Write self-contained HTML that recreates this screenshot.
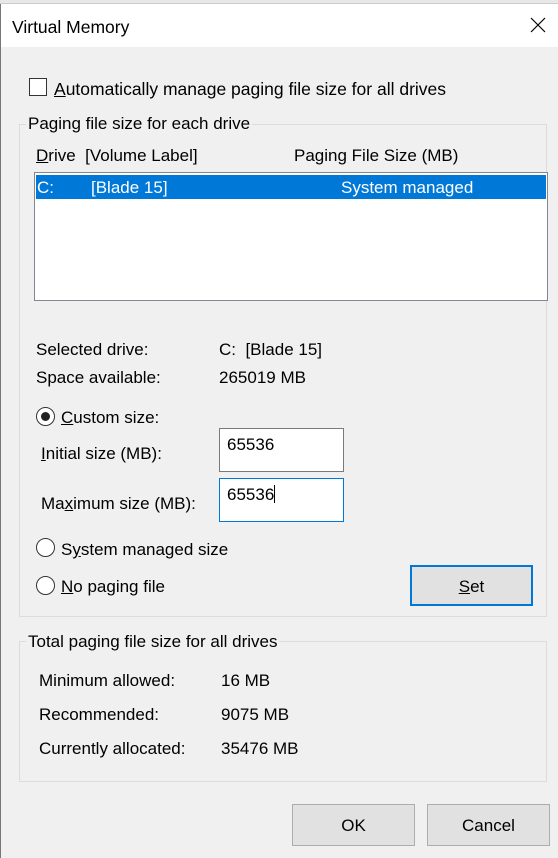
<!DOCTYPE html>
<html><head><style>
*{margin:0;padding:0;box-sizing:border-box}
body{width:558px;height:858px;background:#f0f0f0;font-family:"Liberation Sans",sans-serif;font-size:17px;color:#000;position:relative;overflow:hidden}
.a{position:absolute;white-space:nowrap;line-height:20px}
.u{text-decoration:underline}
.grp{position:absolute;border:1px solid #dcdcdc}
.lbl{position:absolute;background:#f0f0f0;padding:0 2px;line-height:20px}
.tb{position:absolute;background:#fff;border:1px solid #7a7a7a;padding:6px 0 0 7px;line-height:20px}
.btn{position:absolute;background:#e1e1e1;border:1px solid #adadad;text-align:center}
.rad{position:absolute;width:19px;height:19px;border:1px solid #333;border-radius:50%;background:#fff}
</style></head><body>
<div style="position:absolute;left:0;top:0;width:558px;height:4px;background:#e8e8e8;border-bottom:1px solid #ccc"></div>
<div style="position:absolute;left:0;top:4px;width:558px;height:854px;border-left:1px solid #777"></div>
<div style="position:absolute;left:1px;top:4px;width:557px;height:43px;background:#fff"></div>
<div class="a" style="left:12px;top:17px;font-size:17.5px">Virtual Memory</div>
<svg style="position:absolute;left:530px;top:17px" width="16" height="16"><path d="M1 1L15 15M15 1L1 15" stroke="#000" stroke-width="1.2"/></svg>

<div style="position:absolute;left:29px;top:78px;width:18px;height:18px;border:1px solid #333;background:#fff"></div>
<div class="a" style="left:54px;top:79px;font-size:17.5px"><span class="u">A</span>utomatically manage paging file size for all drives</div>

<div class="grp" style="left:19px;top:124px;width:528px;height:493px"></div>
<div class="lbl" style="left:26px;top:114px">Paging file size for each drive</div>
<div class="a" style="left:36px;top:146px"><span class="u">D</span>rive&nbsp; [Volume Label]</div>
<div class="a" style="left:294px;top:146px">Paging File Size (MB)</div>
<div style="position:absolute;left:34px;top:172px;width:514px;height:129px;background:#fff;border:1px solid #828790"></div>
<div style="position:absolute;left:36px;top:175px;width:510px;height:24px;background:#0078d7"></div>
<div class="a" style="left:37px;top:178px;color:#fff">C:</div>
<div class="a" style="left:91px;top:178px;color:#fff">[Blade 15]</div>
<div class="a" style="left:341px;top:178px;color:#fff">System managed</div>

<div class="a" style="left:36px;top:340px">Selected drive:</div>
<div class="a" style="left:219px;top:340px">C:&nbsp; [Blade 15]</div>
<div class="a" style="left:36px;top:368px">Space available:</div>
<div class="a" style="left:219px;top:368px">265019 MB</div>

<div class="rad" style="left:36px;top:407px"></div>
<div style="position:absolute;left:41px;top:412px;width:9px;height:9px;border-radius:50%;background:#222"></div>
<div class="a" style="left:61px;top:408px"><span class="u">C</span>ustom size:</div>
<div class="a" style="left:41px;top:444px"><span class="u">I</span>nitial size (MB):</div>
<div class="tb" style="left:219px;top:428px;width:125px;height:44px">65536</div>
<div class="a" style="left:41px;top:494px">Ma<span class="u">x</span>imum size (MB):</div>
<div class="tb" style="left:219px;top:478px;width:125px;height:44px;border-color:#0078d7">65536<span style="display:inline-block;width:1px;height:18px;background:#000;vertical-align:-3px"></span></div>
<div class="rad" style="left:36px;top:538px"></div>
<div class="a" style="left:61px;top:540px">S<span class="u">y</span>stem managed size</div>
<div class="rad" style="left:36px;top:576px"></div>
<div class="a" style="left:61px;top:577px"><span class="u">N</span>o paging file</div>
<div class="btn" style="left:410px;top:565px;width:123px;height:41px;border:2px solid #0078d7;line-height:39px"><span class="u">S</span>et</div>

<div class="grp" style="left:19px;top:641px;width:528px;height:141px"></div>
<div class="lbl" style="left:26px;top:632px">Total paging file size for all drives</div>
<div class="a" style="left:39px;top:671px">Minimum allowed:</div>
<div class="a" style="left:221px;top:671px">16 MB</div>
<div class="a" style="left:39px;top:705px">Recommended:</div>
<div class="a" style="left:221px;top:705px">9075 MB</div>
<div class="a" style="left:39px;top:739px">Currently allocated:</div>
<div class="a" style="left:221px;top:739px">35476 MB</div>

<div class="btn" style="left:292px;top:804px;width:123px;height:42px;line-height:42px">OK</div>
<div class="btn" style="left:427px;top:804px;width:123px;height:42px;line-height:42px">Cancel</div>
</body></html>
